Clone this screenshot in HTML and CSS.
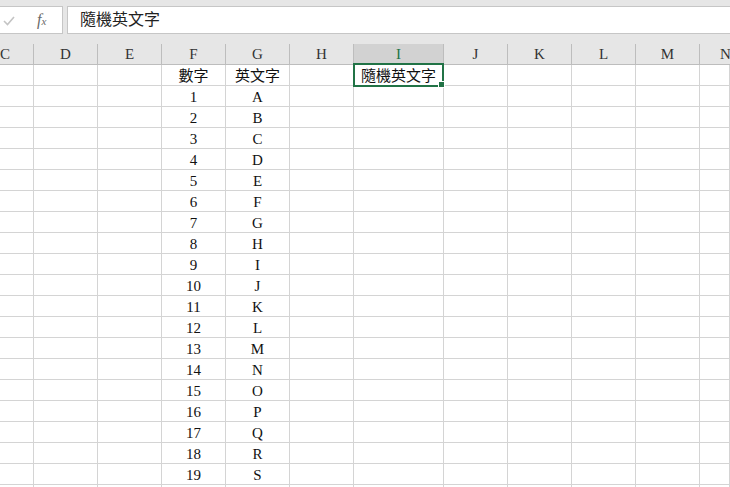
FILE: index.html
```html
<!DOCTYPE html>
<html lang="zh-Hant">
<head>
<meta charset="utf-8">
<title>隨機英文字</title>
<link rel="stylesheet" href="styles.css">
</head>
<body>
<div class="topbar">
  <div class="fbar">
    <div class="fbox">
      <svg class="check" width="12" height="10" viewBox="0 0 12 10"><polyline points="1,5 4.5,8.5 11,1" fill="none" stroke="#c4c4c4" stroke-width="1.6"/></svg>
      <span class="fx">f<sub>x</sub></span>
    </div>
    <div class="finput">隨機英文字</div>
  </div>
</div>
<div class="sheet">
  <div class="row hdr">
    <div class="c">C</div><div class="c">D</div><div class="c">E</div><div class="c">F</div><div class="c">G</div><div class="c">H</div><div class="c sel">I</div><div class="c">J</div><div class="c">K</div><div class="c">L</div><div class="c">M</div><div class="c">N</div>
  </div>
  <div class="row"><div class="c"></div><div class="c"></div><div class="c"></div><div class="c">數字</div><div class="c">英文字</div><div class="c"></div><div class="c active">隨機英文字</div><div class="c"></div><div class="c"></div><div class="c"></div><div class="c"></div><div class="c"></div></div>
  <div class="row"><div class="c"></div><div class="c"></div><div class="c"></div><div class="c">1</div><div class="c">A</div><div class="c"></div><div class="c"></div><div class="c"></div><div class="c"></div><div class="c"></div><div class="c"></div><div class="c"></div></div>
  <div class="row"><div class="c"></div><div class="c"></div><div class="c"></div><div class="c">2</div><div class="c">B</div><div class="c"></div><div class="c"></div><div class="c"></div><div class="c"></div><div class="c"></div><div class="c"></div><div class="c"></div></div>
  <div class="row"><div class="c"></div><div class="c"></div><div class="c"></div><div class="c">3</div><div class="c">C</div><div class="c"></div><div class="c"></div><div class="c"></div><div class="c"></div><div class="c"></div><div class="c"></div><div class="c"></div></div>
  <div class="row"><div class="c"></div><div class="c"></div><div class="c"></div><div class="c">4</div><div class="c">D</div><div class="c"></div><div class="c"></div><div class="c"></div><div class="c"></div><div class="c"></div><div class="c"></div><div class="c"></div></div>
  <div class="row"><div class="c"></div><div class="c"></div><div class="c"></div><div class="c">5</div><div class="c">E</div><div class="c"></div><div class="c"></div><div class="c"></div><div class="c"></div><div class="c"></div><div class="c"></div><div class="c"></div></div>
  <div class="row"><div class="c"></div><div class="c"></div><div class="c"></div><div class="c">6</div><div class="c">F</div><div class="c"></div><div class="c"></div><div class="c"></div><div class="c"></div><div class="c"></div><div class="c"></div><div class="c"></div></div>
  <div class="row"><div class="c"></div><div class="c"></div><div class="c"></div><div class="c">7</div><div class="c">G</div><div class="c"></div><div class="c"></div><div class="c"></div><div class="c"></div><div class="c"></div><div class="c"></div><div class="c"></div></div>
  <div class="row"><div class="c"></div><div class="c"></div><div class="c"></div><div class="c">8</div><div class="c">H</div><div class="c"></div><div class="c"></div><div class="c"></div><div class="c"></div><div class="c"></div><div class="c"></div><div class="c"></div></div>
  <div class="row"><div class="c"></div><div class="c"></div><div class="c"></div><div class="c">9</div><div class="c">I</div><div class="c"></div><div class="c"></div><div class="c"></div><div class="c"></div><div class="c"></div><div class="c"></div><div class="c"></div></div>
  <div class="row"><div class="c"></div><div class="c"></div><div class="c"></div><div class="c">10</div><div class="c">J</div><div class="c"></div><div class="c"></div><div class="c"></div><div class="c"></div><div class="c"></div><div class="c"></div><div class="c"></div></div>
  <div class="row"><div class="c"></div><div class="c"></div><div class="c"></div><div class="c">11</div><div class="c">K</div><div class="c"></div><div class="c"></div><div class="c"></div><div class="c"></div><div class="c"></div><div class="c"></div><div class="c"></div></div>
  <div class="row"><div class="c"></div><div class="c"></div><div class="c"></div><div class="c">12</div><div class="c">L</div><div class="c"></div><div class="c"></div><div class="c"></div><div class="c"></div><div class="c"></div><div class="c"></div><div class="c"></div></div>
  <div class="row"><div class="c"></div><div class="c"></div><div class="c"></div><div class="c">13</div><div class="c">M</div><div class="c"></div><div class="c"></div><div class="c"></div><div class="c"></div><div class="c"></div><div class="c"></div><div class="c"></div></div>
  <div class="row"><div class="c"></div><div class="c"></div><div class="c"></div><div class="c">14</div><div class="c">N</div><div class="c"></div><div class="c"></div><div class="c"></div><div class="c"></div><div class="c"></div><div class="c"></div><div class="c"></div></div>
  <div class="row"><div class="c"></div><div class="c"></div><div class="c"></div><div class="c">15</div><div class="c">O</div><div class="c"></div><div class="c"></div><div class="c"></div><div class="c"></div><div class="c"></div><div class="c"></div><div class="c"></div></div>
  <div class="row"><div class="c"></div><div class="c"></div><div class="c"></div><div class="c">16</div><div class="c">P</div><div class="c"></div><div class="c"></div><div class="c"></div><div class="c"></div><div class="c"></div><div class="c"></div><div class="c"></div></div>
  <div class="row"><div class="c"></div><div class="c"></div><div class="c"></div><div class="c">17</div><div class="c">Q</div><div class="c"></div><div class="c"></div><div class="c"></div><div class="c"></div><div class="c"></div><div class="c"></div><div class="c"></div></div>
  <div class="row"><div class="c"></div><div class="c"></div><div class="c"></div><div class="c">18</div><div class="c">R</div><div class="c"></div><div class="c"></div><div class="c"></div><div class="c"></div><div class="c"></div><div class="c"></div><div class="c"></div></div>
  <div class="row"><div class="c"></div><div class="c"></div><div class="c"></div><div class="c">19</div><div class="c">S</div><div class="c"></div><div class="c"></div><div class="c"></div><div class="c"></div><div class="c"></div><div class="c"></div><div class="c"></div></div>
  <div class="row"><div class="c"></div><div class="c"></div><div class="c"></div><div class="c"></div><div class="c"></div><div class="c"></div><div class="c"></div><div class="c"></div><div class="c"></div><div class="c"></div><div class="c"></div><div class="c"></div></div>
</div>
</body>
</html>
```

FILE: styles.css
```css
html, body {
  margin: 0;
  padding: 0;
}
body {
  width: 730px;
  height: 487px;
  overflow: hidden;
  background: #ffffff;
  font-family: "Liberation Serif", "Noto Sans CJK TC", serif;
  color: #000;
}
.topbar {
  height: 44px;
  box-sizing: border-box;
  padding-top: 6px;
  background: #e6e6e6;
}
.fbar {
  display: flex;
  gap: 4px;
  height: 28px;
}
.fbox {
  width: 63px;
  box-sizing: border-box;
  background: #fff;
  border: 1px solid #c6c6c6;
  border-left: none;
  display: flex;
  align-items: center;
  padding-left: 3px;
}
.check {
  display: block;
  margin-top: 2px;
}
.fx {
  margin-left: 22px;
  font-family: "Liberation Serif", serif;
  font-style: italic;
  font-size: 16px;
  color: #6a6a6a;
  line-height: 1;
}
.fx sub {
  font-size: 11px;
  vertical-align: 0;
}
.finput {
  flex: 1;
  box-sizing: border-box;
  background: #fff;
  border: 1px solid #c6c6c6;
  border-right: none;
  padding-left: 12px;
  font-size: 16px;
  line-height: 26px;
  color: #222;
}
.row {
  display: grid;
  grid-template-columns: 34px 64px 64px 64px 64px 64px 90px 64px 64px 64px 64px 1fr;
  height: 21px;
}
.c {
  box-sizing: border-box;
  border-right: 1px solid #d4d4d4;
  border-bottom: 1px solid #d4d4d4;
  text-align: center;
  font-size: 15px;
  line-height: 23px;
  height: 21px;
  white-space: nowrap;
  overflow: visible;
  color: #111;
}
.hdr .c {
  background: #e6e6e6;
  border-right-color: #bdbdbd;
  border-bottom-color: #bdbdbd;
  color: #333;
  line-height: 21px;
}
.hdr .c:first-child {
  text-align: right;
  padding-right: 27px;
}
.hdr .c:last-child {
  text-align: left;
  padding-left: 20px;
}
.hdr .c.sel {
  background: #d2d2d2;
  color: #217346;
}
.active {
  position: relative;
}
.active::after {
  content: "";
  position: absolute;
  left: -1px;
  top: -2px;
  width: 91px;
  height: 24px;
  box-sizing: border-box;
  border: 2px solid #217346;
}
.active::before {
  content: "";
  position: absolute;
  left: 84px;
  top: 16px;
  width: 7px;
  height: 7px;
  box-sizing: border-box;
  background: #217346;
  border: 1px solid #fff;
  z-index: 1;
}
```
